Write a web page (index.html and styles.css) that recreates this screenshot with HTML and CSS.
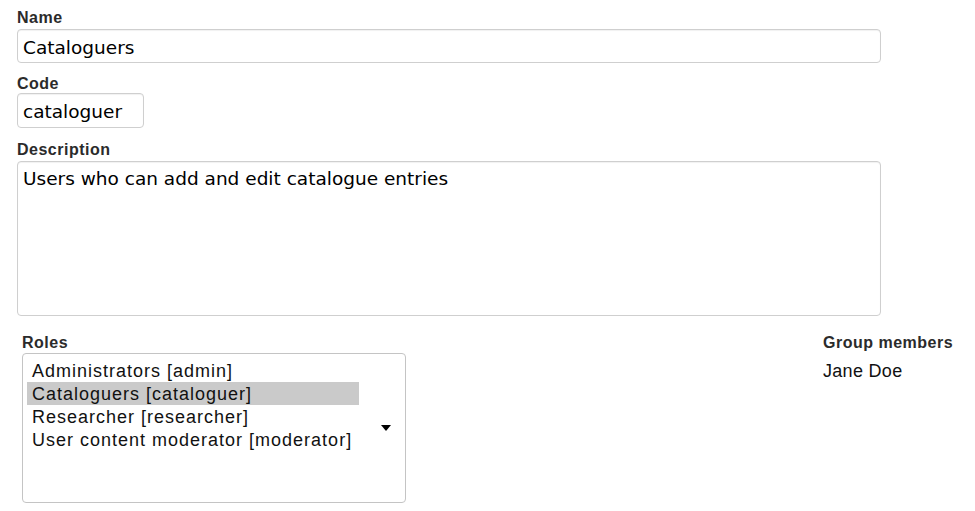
FILE: index.html
```html
<!DOCTYPE html>
<html lang="en">
<head>
<meta charset="utf-8">
<title>Group</title>
<link rel="stylesheet" href="styles.css">
</head>
<body>
<form class="form">
  <div class="field field-name">
    <label class="label" for="name">Name</label>
    <input class="input input-wide" id="name" type="text" value="Cataloguers">
  </div>
  <div class="field field-code">
    <label class="label" for="code">Code</label>
    <input class="input input-code" id="code" type="text" value="cataloguer">
  </div>
  <div class="field">
    <label class="label" for="desc">Description</label>
    <textarea class="input textarea" id="desc">Users who can add and edit catalogue entries</textarea>
  </div>
  <div class="row">
    <div class="roles">
      <div class="label">Roles</div>
      <div class="listbox">
        <ul class="options">
          <li class="option">Administrators [admin]</li>
          <li class="option selected">Cataloguers [cataloguer]</li>
          <li class="option">Researcher [researcher]</li>
          <li class="option">User content moderator [moderator]</li>
        </ul>
        <span class="arrow"></span>
      </div>
    </div>
    <div class="members">
      <div class="label">Group members</div>
      <div class="member">Jane Doe</div>
    </div>
  </div>
</form>
</body>
</html>
```

FILE: styles.css
```css
* { box-sizing: border-box; }
html, body { margin: 0; background: #fff; }
body {
  padding: 9px 17px 0 17px;
  font-family: "Liberation Sans", Arial, sans-serif;
  color: #111;
}
.form { display: flex; flex-direction: column; }
.field { display: flex; flex-direction: column; align-items: flex-start; margin-bottom: 12px; }
.field-name { margin-bottom: 12px; }
.field-code { margin-bottom: 13px; }
.label {
  display: block;
  font-weight: bold;
  font-size: 16px;
  letter-spacing: 0.5px;
  line-height: 18px;
  color: #2b2b2b;
  margin-bottom: 2px;
}
.field-code .label { margin-bottom: 0; }
.input {
  font-family: "DejaVu Sans", Verdana, sans-serif;
  font-size: 18.5px;
  color: #000;
  border: 1px solid #cfcfcf;
  border-radius: 4px;
  background: #fff;
  box-shadow: inset 0 1px 1px rgba(0,0,0,0.06);
  padding: 2px 5px 0 5px;
  margin: 0;
  outline: none;
}
.input-wide { width: 864px; height: 34px; }
.input-code { width: 127px; height: 35px; }
.textarea {
  width: 864px;
  height: 155px;
  padding: 6px 5px;
  line-height: 21px;
  resize: none;
  display: block;
}
.row {
  display: flex;
  justify-content: space-between;
  padding-left: 5px;
  margin-top: 6px;
}
.row .label { margin-bottom: 1px; }
.roles { width: 384px; }
.listbox {
  width: 384px;
  height: 150px;
  border: 1px solid #c4c4c4;
  border-radius: 4px;
  padding: 5px 4px;
  display: flex;
  align-items: center;
}
.options {
  list-style: none;
  margin: 0;
  padding: 0;
  width: 332px;
  align-self: flex-start;
}
.option {
  font-size: 18px;
  letter-spacing: 1px;
  line-height: 23px;
  height: 23px;
  padding-left: 5px;
  padding-top: 1px;
  color: #111;
  white-space: nowrap;
}
.option.selected { background: #cacaca; }
.arrow {
  margin-left: 22px;
  width: 0;
  height: 0;
  border-left: 5.5px solid transparent;
  border-right: 5.5px solid transparent;
  border-top: 6px solid #000;
}
.members { width: 135px; }
.member {
  font-size: 18px;
  letter-spacing: 0.3px;
  line-height: 22px;
  margin-top: 8px;
  color: #111;
}
```
